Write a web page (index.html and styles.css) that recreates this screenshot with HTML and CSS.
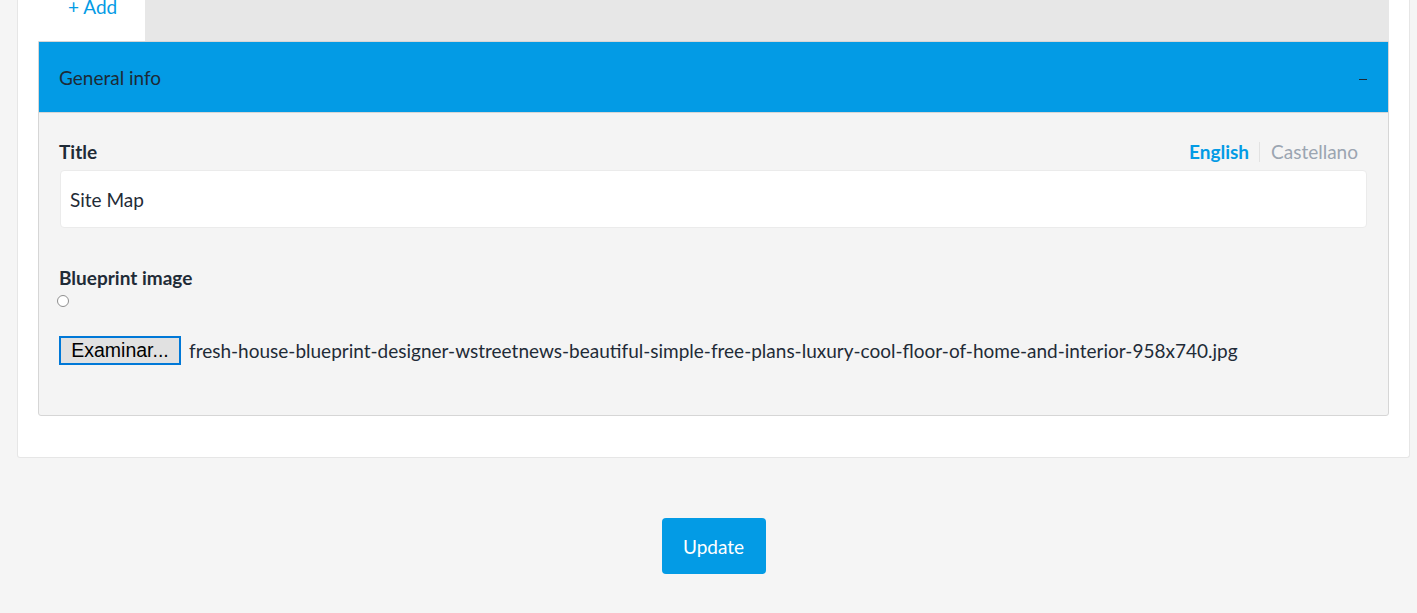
FILE: index.html
```html
<!DOCTYPE html>
<html lang="en">
<head>
<meta charset="utf-8">
<title>Edit blueprint</title>
<link rel="stylesheet" href="styles.css">
</head>
<body>
<div class="page">
  <div class="card">
    <div class="tabs">
      <div class="tab">+ Add</div>
    </div>
    <div class="panel">
      <div class="panel-head">
        <span class="panel-title">General info</span>
        <span class="panel-toggle"></span>
      </div>
      <div class="panel-body">
        <div class="field-head">
          <label class="label">Title</label>
          <div class="langs">
            <span class="lang active">English</span>
            <span class="lang-sep"></span>
            <span class="lang">Castellano</span>
          </div>
        </div>
        <div class="input">Site Map</div>

        <label class="label label-blueprint">Blueprint image</label>
        <div class="radio-row"><span class="radio"></span></div>
        <div class="file-row">
          <span class="file-btn">Examinar...</span>
          <span class="file-name">fresh-house-blueprint-designer-wstreetnews-beautiful-simple-free-plans-luxury-cool-floor-of-home-and-interior-958x740.jpg</span>
        </div>
      </div>
    </div>
  </div>
  <div class="actions">
    <button class="btn-update">Update</button>
  </div>
</div>
</body>
</html>
```
FILE: styles.css
```css
html, body {
  margin: 0;
  padding: 0;
}
body {
  background: #f5f5f5;
  font-family: "Source Sans Pro", Lato, "Open Sans", sans-serif;
  font-size: 19px;
  color: #1f2b37;
  height: 613px;
  overflow: hidden;
}
.page {
  margin: -20px 7px 0 17px;
}
.card {
  background: #fff;
  border: 1px solid #e6e6e6;
  border-top: none;
  border-radius: 0 0 3px 3px;
  padding: 0 20px 41px 20px;
}
.tabs {
  display: flex;
  background: #e7e7e7;
  height: 61px;
}
.tab {
  background: #fff;
  width: 107px;
  box-sizing: border-box;
  padding: 17px 0 0 30px;
  line-height: 20px;
  color: #039be5;
}
.panel {
  border: 1px solid #d6d6d6;
  border-radius: 0 0 3px 3px;
  background: #f4f4f4;
}
.panel-head {
  display: flex;
  justify-content: space-between;
  align-items: center;
  height: 70px;
  padding: 0 21px 0 20px;
  background: #039be5;
  border-bottom: 1px solid #d6d6d6;
  color: #1d2a36;
}
.panel-title {
  line-height: 24px;
  padding-top: 2px;
}
.panel-toggle {
  display: block;
  width: 8px;
  height: 1px;
  margin-top: 4px;
  background: #1d2a36;
}
.panel-body {
  padding: 26px 21px 50px 20px;
}
.field-head {
  display: flex;
  justify-content: space-between;
  align-items: baseline;
  line-height: 26px;
  margin-bottom: 5px;
}
.label {
  display: block;
  font-weight: 700;
  line-height: 26px;
}
.langs {
  display: flex;
  align-items: center;
  padding-right: 9px;
}
.lang {
  color: #9ba5b1;
}
.lang.active {
  color: #039be5;
  font-weight: 700;
}
.lang-sep {
  width: 1px;
  height: 20px;
  background: #e2e2e2;
  margin: 0 11px 0 10px;
}
.input {
  background: #fff;
  border: 1px solid #ebebeb;
  border-radius: 4px;
  height: 56px;
  line-height: 58px;
  padding: 0 9px;
  margin-left: 1px;
}
.label-blueprint {
  margin-top: 37px;
}
.radio-row {
  height: 14px;
  padding-top: 4px;
}
.radio {
  display: block;
  width: 10px;
  height: 10px;
  margin-left: -2px;
  border: 1px solid #8f8f8f;
  border-radius: 50%;
  background: #fff;
}
.file-row {
  display: flex;
  align-items: center;
  margin-top: 27px;
}
.file-btn {
  box-sizing: border-box;
  height: 29px;
  width: 122px;
  border: 2px solid #0078d7;
  background: #e1e1e1;
  font-family: "Liberation Sans", Arial, sans-serif;
  font-size: 19.5px;
  line-height: 25px;
  text-align: center;
  color: #000;
}
.file-name {
  margin-left: 8px;
  line-height: 29px;
}
.actions {
  display: flex;
  justify-content: center;
  padding-top: 60px;
}
.btn-update {
  width: 104px;
  height: 56px;
  border: none;
  border-radius: 4px;
  background: #039be5;
  color: #fff;
  font-family: inherit;
  font-size: 19px;
  padding: 0;
}
```
